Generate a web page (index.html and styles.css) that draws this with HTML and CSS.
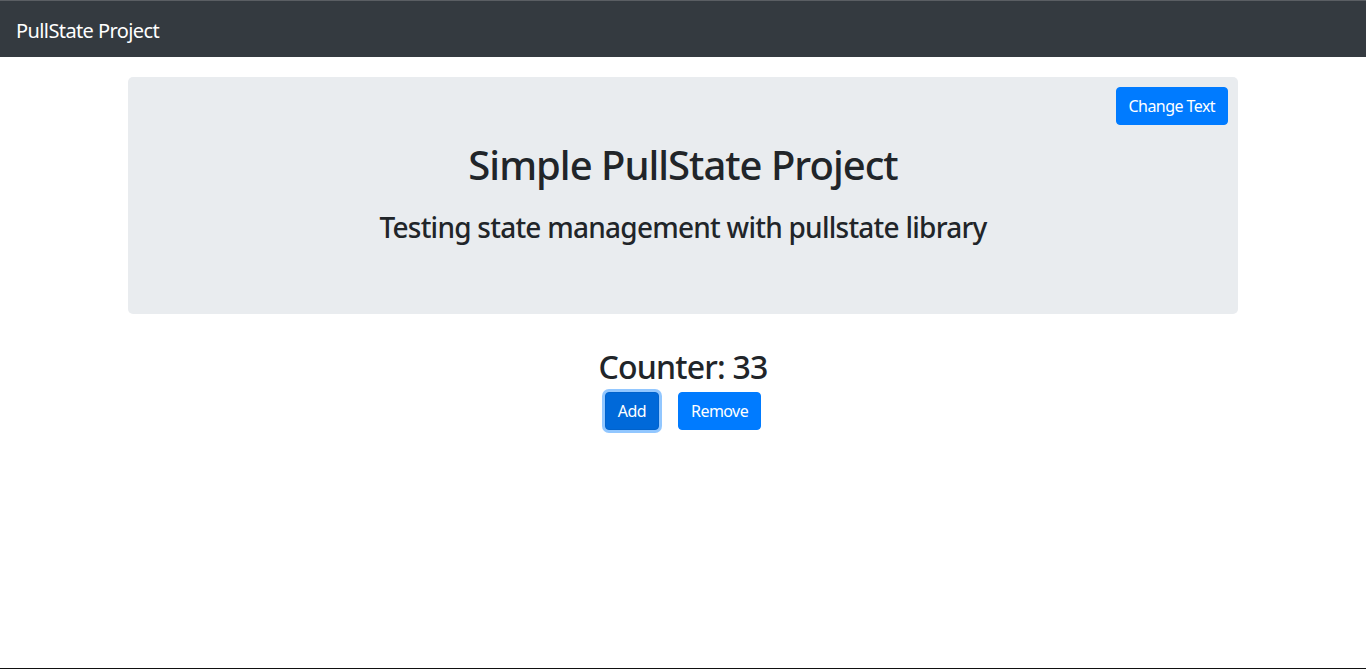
FILE: index.html
```html
<!DOCTYPE html>
<html lang="en">
<head>
<meta charset="utf-8">
<title>PullState Project</title>
<link rel="stylesheet" href="styles.css">
</head>
<body>
<nav class="navbar">
  <a class="brand" href="#">PullState Project</a>
</nav>
<main class="container">
  <section class="jumbotron">
    <button class="btn btn-corner">Change Text</button>
    <h1 class="title">Simple PullState Project</h1>
    <h3 class="subtitle">Testing state management with pullstate library</h3>
  </section>
  <section class="counter">
    <h2 class="counter-title">Counter: 33</h2>
    <div class="counter-actions">
      <button class="btn btn-focus">Add</button>
      <button class="btn">Remove</button>
    </div>
  </section>
</main>
<div class="spacer"></div>
<div class="bottom-line"></div>
</body>
</html>
```
FILE: styles.css
```css
* { box-sizing: border-box; }
html, body { margin: 0; padding: 0; }
body {
  font-family: "Segoe UI", "Noto Sans", "Open Sans", sans-serif;
  color: #212529;
  background: #fff;
  min-height: 100vh;
  display: flex;
  flex-direction: column;
  font-size: 16px;
  line-height: 1.5;
}
.navbar {
  background: #343a40;
  border-top: 1px solid #5a5e63;
  height: 57px;
  padding: 0 16px;
  display: flex;
  align-items: center;
}
.brand {
  color: #fff;
  text-decoration: none;
  font-size: 20px;
  line-height: 30px;
  padding-top: 3px;
  letter-spacing: -0.03em;
}
.container {
  width: 1110px;
  margin: 0 auto;
}
.jumbotron {
  position: relative;
  margin-top: 20px;
  background: #e9ecef;
  border-radius: 5px;
  height: 237px;
  padding-top: 64px;
  text-align: center;
}
.btn {
  font-family: inherit;
  font-size: 16px;
  line-height: 24px;
  padding: 6px 12px;
  border: 1px solid #007bff;
  background: #007bff;
  color: #fff;
  border-radius: 4px;
  cursor: pointer;
  letter-spacing: -0.035em;
}
.btn-corner {
  position: absolute;
  top: 10px;
  right: 10px;
}
.title {
  margin: 0;
  font-size: 40px;
  line-height: 48px;
  font-weight: 500;
  letter-spacing: -0.025em;
}
.subtitle {
  margin: 21px 0 0;
  font-size: 28px;
  line-height: 34px;
  font-weight: 500;
  letter-spacing: -0.027em;
}
.counter {
  text-align: center;
  margin-top: 34px;
}
.counter-title {
  margin: 0;
  font-size: 32px;
  line-height: 38px;
  font-weight: 500;
  letter-spacing: -0.025em;
}
.counter-actions {
  margin-top: 6px;
  display: flex;
  justify-content: center;
  gap: 19px;
}
.btn-focus {
  background: #0069d9;
  border-color: #0062cc;
  box-shadow: 0 0 0 3px rgba(38, 143, 255, 0.5);
}
.spacer { flex: 1; }
.bottom-line {
  height: 1px;
  background: #111;
}
```
